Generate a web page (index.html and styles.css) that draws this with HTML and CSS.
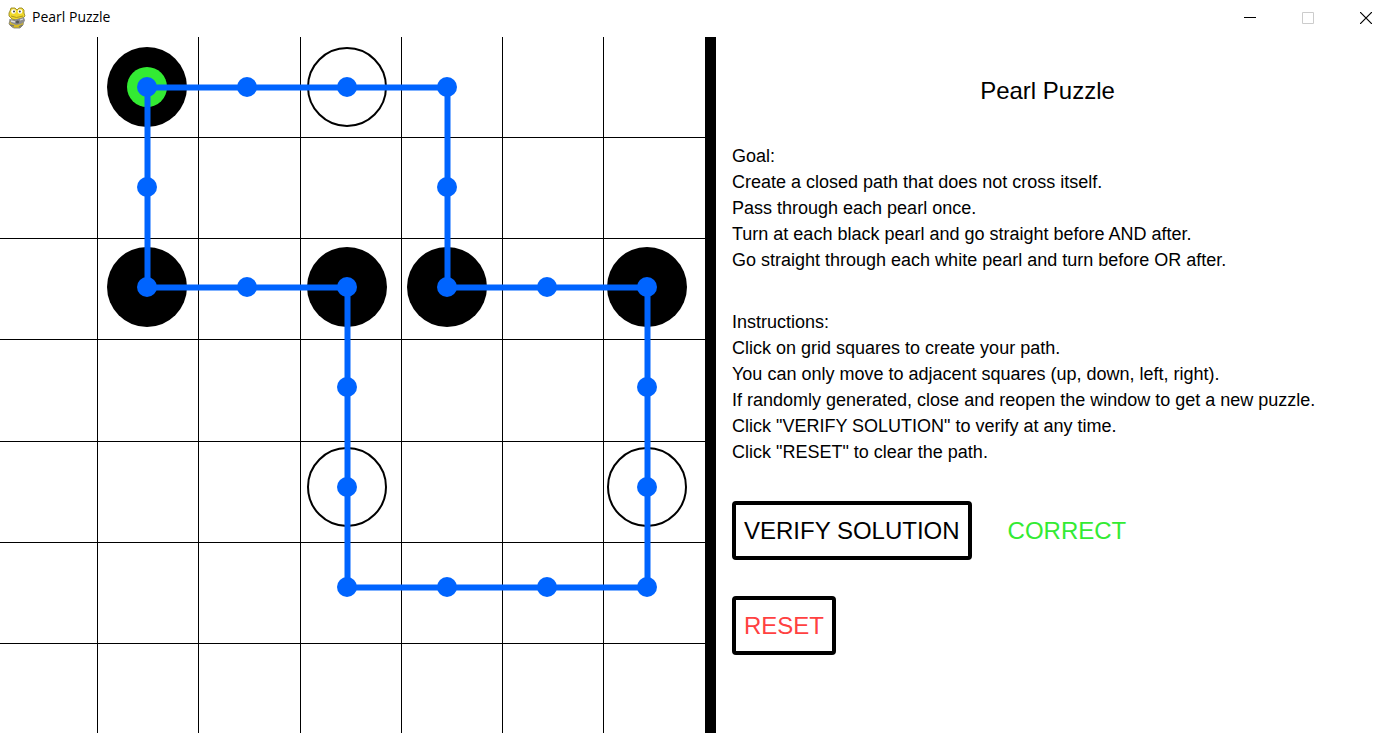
FILE: index.html
```html
<!DOCTYPE html>
<html lang="en">
<head>
<meta charset="utf-8">
<title>Pearl Puzzle</title>
<link rel="stylesheet" href="styles.css">
</head>
<body>
<header class="titlebar">
  <svg class="app-icon" viewBox="0 0 18 22" aria-hidden="true">
    <path d="M2 13L1 17L4 20L6 21L12 21L15 18L16 12Z" fill="#d9bd22" stroke="#777" stroke-width=".8"/>
    <path d="M3 1L7 1L9 3L11 1L14 1L16 3L16 6L17 9L15 11L12 12L8 13L4 12L1 9L1 6L2 4Z" fill="#f0d92c" stroke="#96882a" stroke-width=".9"/>
    <ellipse cx="5.500" cy="4.500" rx="2.300" ry="2.300" fill="#fff"/>
    <ellipse cx="12" cy="4.500" rx="2.300" ry="2.300" fill="#fff"/>
    <circle cx="6" cy="4.500" r="1" fill="#444"/>
    <circle cx="11.800" cy="4.500" r="1" fill="#444"/>
    <path d="M3 9Q8 12 15 9" fill="none" stroke="#ad9621"/>
    <path d="M1 12L5 13L9 12L16 10L17 14L13 17L8 18L3 16Z" fill="#8d8d8d"/>
    <path d="M3 14L7 15M12 13L15 12" stroke="#ddd" stroke-width="1.300"/>
    <circle cx="9.500" cy="15" r="1.600" fill="#555"/>
    <path d="M2 18L6 19M11 20L14 18" stroke="#777" stroke-width="1.500"/>
  </svg>
  <span class="app-name">Pearl Puzzle</span>
  <div class="window-controls">
    <button class="window-button" type="button" aria-label="Minimize">
      <svg class="window-glyph" viewBox="0 0 12 12"><path d="M0 5.500H12" stroke="#000"/></svg>
    </button>
    <button class="window-button" type="button" aria-label="Maximize" disabled>
      <svg class="window-glyph" viewBox="0 0 12 12"><path d="M.5.5H11.500V11.500H.5Z" fill="none" stroke="#ccc"/></svg>
    </button>
    <button class="window-button" type="button" aria-label="Close">
      <svg class="window-glyph" viewBox="0 0 12 12"><path d="M0 0L12 12M12 0L0 12" stroke="#000" stroke-width="1.200"/></svg>
    </button>
  </div>
</header>
<main class="game">
  <div class="board-pane">
    <svg class="board" viewBox="0 0 705 696" role="img" aria-label="Puzzle board with a closed path through every pearl">
      <path class="grid-lines" d="M97.500 0V696M198.500 0V696M300.500 0V696M401.500 0V696M502.500 0V696M603.500 0V696M0 100.500H705M0 201.500H705M0 302.500H705M0 404.500H705M0 505.500H705M0 606.500H705"/>
      <g class="black-pearls">
        <circle cx="147" cy="50" r="40"/>
        <circle cx="147" cy="250" r="40"/>
        <circle cx="347" cy="250" r="40"/>
        <circle cx="447" cy="250" r="40"/>
        <circle cx="647" cy="250" r="40"/>
      </g>
      <g class="white-pearls">
        <circle cx="347" cy="50" r="39"/>
        <circle cx="347" cy="450" r="39"/>
        <circle cx="647" cy="450" r="39"/>
      </g>
      <circle class="start" cx="147" cy="50" r="20"/>
      <path class="route" d="M147.500 50.500H447.500V250.500H647.500V550.500H347.500V250.500H147.500Z"/>
      <g class="steps">
        <circle cx="147" cy="50" r="10"/>
        <circle cx="247" cy="50" r="10"/>
        <circle cx="347" cy="50" r="10"/>
        <circle cx="447" cy="50" r="10"/>
        <circle cx="447" cy="150" r="10"/>
        <circle cx="447" cy="250" r="10"/>
        <circle cx="547" cy="250" r="10"/>
        <circle cx="647" cy="250" r="10"/>
        <circle cx="647" cy="350" r="10"/>
        <circle cx="647" cy="450" r="10"/>
        <circle cx="647" cy="550" r="10"/>
        <circle cx="547" cy="550" r="10"/>
        <circle cx="447" cy="550" r="10"/>
        <circle cx="347" cy="550" r="10"/>
        <circle cx="347" cy="450" r="10"/>
        <circle cx="347" cy="350" r="10"/>
        <circle cx="347" cy="250" r="10"/>
        <circle cx="247" cy="250" r="10"/>
        <circle cx="147" cy="250" r="10"/>
        <circle cx="147" cy="150" r="10"/>
      </g>
    </svg>
  </div>
  <section class="panel">
    <h1 class="heading">Pearl Puzzle</h1>
    <div class="rules">
      <h2 class="rules-title">Goal:</h2>
      <p class="rule">Create a closed path that does not cross itself.</p>
      <p class="rule">Pass through each pearl once.</p>
      <p class="rule">Turn at each black pearl and go straight before AND after.</p>
      <p class="rule">Go straight through each white pearl and turn before OR after.</p>
    </div>
    <div class="rules">
      <h2 class="rules-title">Instructions:</h2>
      <p class="rule">Click on grid squares to create your path.</p>
      <p class="rule">You can only move to adjacent squares (up, down, left, right).</p>
      <p class="rule">If randomly generated, close and reopen the window to get a new puzzle.</p>
      <p class="rule">Click "VERIFY SOLUTION" to verify at any time.</p>
      <p class="rule">Click "RESET" to clear the path.</p>
    </div>
    <div class="verify-row">
      <button class="action" type="button">VERIFY SOLUTION</button>
      <output class="result">CORRECT</output>
    </div>
    <button class="action action-reset" type="button">RESET</button>
  </section>
</main>
</body>
</html>
```
FILE: styles.css
```css
* {
  box-sizing: border-box;
}

body {
  margin: 0;
  min-height: 100vh;
  display: flex;
  flex-direction: column;
  background: #fff;
  color: #000;
  font-family: "Liberation Sans", Arial, sans-serif;
}

.titlebar {
  display: flex;
  align-items: center;
  height: 37px;
  padding: 0 2px 2px 8px;
}

.app-icon {
  width: 18px;
  height: 22px;
}

.app-name {
  margin: 0 0 2px 6px;
  font: 14px/20px "Open Sans", "Noto Sans", sans-serif;
}

.window-controls {
  display: flex;
  gap: 12px;
  margin-left: auto;
}

.window-button {
  display: grid;
  place-items: center;
  width: 46px;
  height: 34px;
  padding: 0;
  border: 0;
  background: none;
}

.window-glyph {
  width: 12px;
  height: 12px;
}

.game {
  flex: 1;
  display: grid;
  grid-template-columns: minmax(0, 716fr) minmax(0, 675fr);
}

.board-pane {
  border-right: 11px solid #000;
}

.board {
  display: block;
  width: 100%;
  height: auto;
}

.grid-lines {
  stroke: #000;
  stroke-width: 1;
}

.white-pearls {
  fill: #fff;
  stroke: #000;
  stroke-width: 2;
}

.start {
  fill: #33eb33;
}

.route {
  fill: none;
  stroke: #0064ff;
  stroke-width: 6;
}

.steps {
  fill: #0064ff;
}

.panel {
  display: flex;
  flex-direction: column;
  align-items: flex-start;
  padding: 36px 28px 36px 16px;
}

.heading {
  align-self: stretch;
  margin: 0 0 34px;
  font-size: 24px;
  font-weight: 400;
  line-height: 36px;
  text-align: center;
}

.rules,
.verify-row {
  margin-bottom: 36px;
}

.rules-title,
.rule {
  margin: 0;
  font-size: 18px;
  font-weight: 400;
  line-height: 26px;
}

.verify-row {
  display: flex;
  align-items: center;
  gap: 36px;
}

.action {
  padding: 10px 8px;
  border: 4px solid #000;
  border-radius: 4px;
  background: #fff;
  color: #000;
  font-family: inherit;
  font-size: 24px;
  line-height: 31px;
}

.action-reset {
  color: #ff4141;
}

.result {
  color: #33eb33;
  font-size: 24px;
  line-height: 31px;
}
```
